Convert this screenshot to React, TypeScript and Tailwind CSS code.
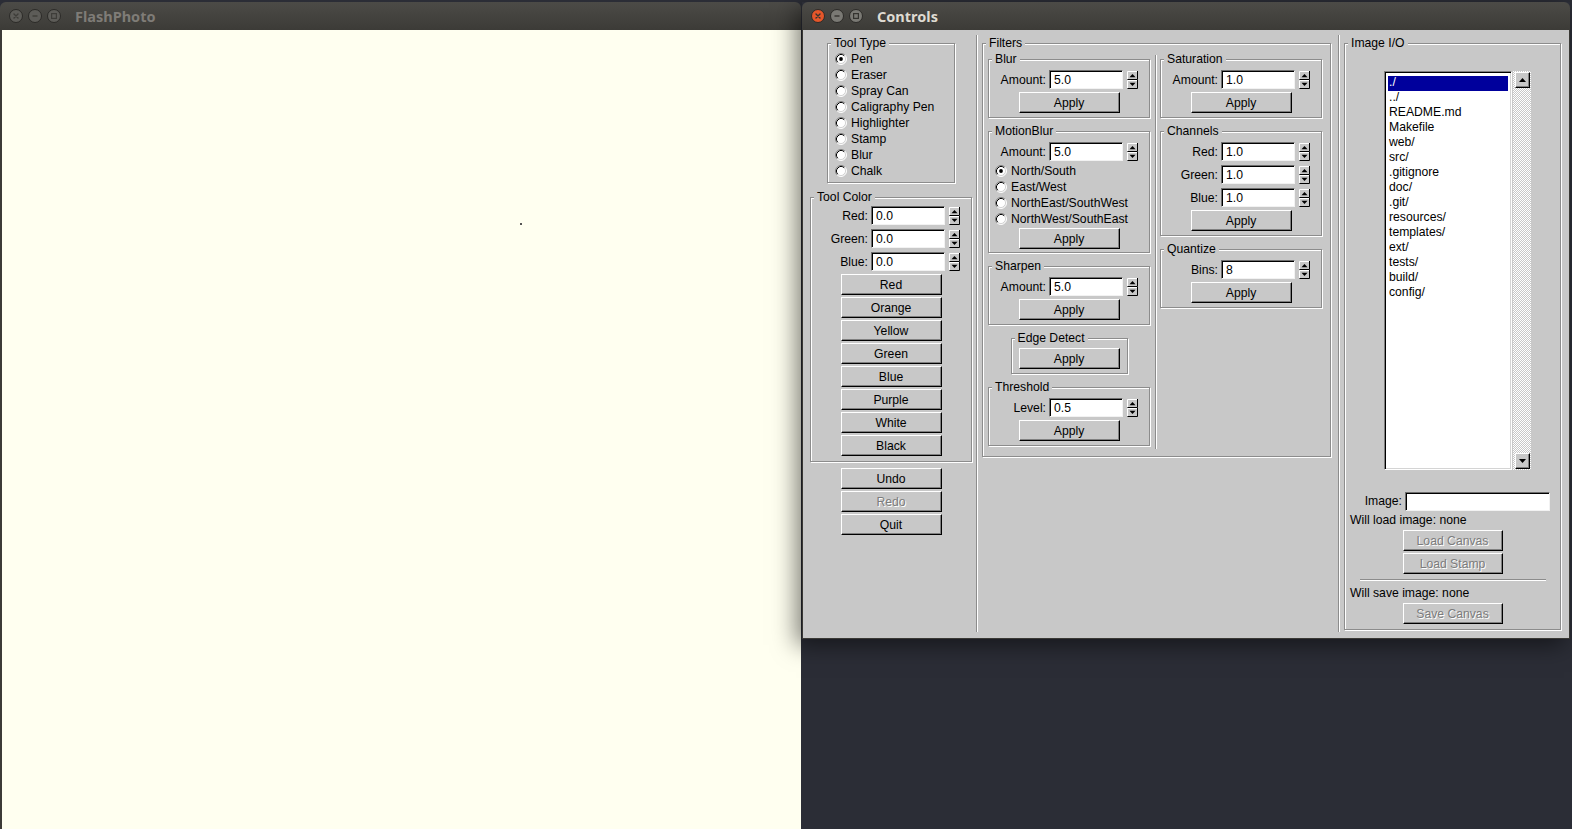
import React from "react";

type Kids = { children?: React.ReactNode };

const FILES = [
  "./",
  "../",
  "README.md",
  "Makefile",
  "web/",
  "src/",
  ".gitignore",
  "doc/",
  ".git/",
  "resources/",
  "templates/",
  "ext/",
  "tests/",
  "build/",
  "config/",
];

// window title bar buttons (ubuntu style)
function WinBtn({ kind, active }: { kind: "close" | "min" | "max"; active: boolean }) {
  const fill = kind === "close" && active ? "#e5562a" : active ? "#7a7974" : "#5d5c58";
  const mark = active ? "#34332f" : "#3e3d39";
  return (
    <svg width="14" height="14" viewBox="0 0 14 14" className="shrink-0">
      <circle cx="7" cy="7" r="6.5" fill={fill} stroke="#2c2b28" strokeWidth="1" />
      {kind === "close" && (
        <path d="M5 5L9 9M9 5L5 9" stroke={mark} strokeWidth="1.4" strokeLinecap="round" />
      )}
      {kind === "min" && <path d="M4.5 7H9.5" stroke={mark} strokeWidth="1.4" />}
      {kind === "max" && (
        <rect x="4.6" y="4.6" width="4.8" height="4.8" fill="none" stroke={mark} strokeWidth="1.2" />
      )}
    </svg>
  );
}

function TitleBar({ title, active }: { title: string; active: boolean }) {
  return (
    <div className="flex h-[28px] shrink-0 items-center gap-[5px] rounded-t-[6px] bg-linear-to-b from-[#4c4b47] to-[#3c3b37] pl-[9px]">
      <WinBtn kind="close" active={active} />
      <WinBtn kind="min" active={active} />
      <WinBtn kind="max" active={active} />
      <span
        className={`ml-[9px] font-['Noto_Sans',sans-serif] text-[14.5px] font-bold leading-[18px] ${
          active ? "text-[#dfdbd2]" : "text-[#7f7c77]"
        }`}
      >
        {title}
      </span>
    </div>
  );
}

// GLUI style etched panel with a label sitting on the top line
function Panel({ label, className = "", children }: { label?: string; className?: string } & Kids) {
  return (
    <div className={"relative shrink-0 border border-[#8c8c8c] shadow-[inset_1px_1px_0_#fff,1px_1px_0_#fff] " + className}>
      {label && (
        <span className="absolute left-[3px] top-[-8px] whitespace-nowrap bg-[#c8c8c8] px-[3px] leading-[14px]">
          {label}
        </span>
      )}
      {children}
    </div>
  );
}

function Spinner() {
  return (
    <svg width="11" height="18" viewBox="0 0 11 18" className="ml-[4px] shrink-0">
      <rect x="0" y="0" width="11" height="18" fill="#c8c8c8" />
      <path d="M0.5 8V0.5H10" stroke="#fff" fill="none" />
      <path d="M0.5 8.5H10.5V0" stroke="#000" fill="none" />
      <path d="M0.5 17V9.5H10" stroke="#fff" fill="none" />
      <path d="M0.5 17.5H10.5V9" stroke="#000" fill="none" />
      <path d="M2.5 6.2L5.5 3L8.5 6.2Z" fill="#000" />
      <path d="M2.5 11.8L8.5 11.8L5.5 15Z" fill="#000" />
    </svg>
  );
}

function TextBox({ value = "", w = "w-[74px]" }: { value?: string; w?: string }) {
  return (
    <div
      className={`${w} h-[19px] shrink-0 border border-t-[#6e6e6e] border-l-[#6e6e6e] border-r-[#f2f2f2] border-b-[#f2f2f2] bg-white pl-[4px] pt-[1px] leading-[16px] shadow-[inset_1px_1px_0_#000]`}
    >
      {value}
    </div>
  );
}

function FieldRow({ label, value }: { label: string; value: string }) {
  return (
    <div className="flex h-[23px] items-center">
      <span className="w-[60px] shrink-0 pr-[3px] text-right leading-[14px]">{label}</span>
      <TextBox value={value} />
      <Spinner />
    </div>
  );
}

function Btn({ label, disabled = false, w = "w-[101px]" }: { label: string; disabled?: boolean; w?: string }) {
  return (
    <button
      type="button"
      className={`flex h-[21px] ${w} shrink-0 items-center justify-center border border-t-white border-l-white border-r-black border-b-black bg-[#c8c8c8] leading-[14px] shadow-[inset_-1px_-1px_0_#808080] ${
        disabled ? "text-[#7c7c7c] [text-shadow:1px_1px_0_#fff]" : "text-black"
      }`}
    >
      {label}
    </button>
  );
}

function BtnRow({ label }: { label: string }) {
  return (
    <div className="flex h-[23px] items-center justify-center">
      <Btn label={label} />
    </div>
  );
}

function Radio({ checked = false }: { checked?: boolean }) {
  return (
    <svg width="12" height="12" viewBox="0 0 12 12" className="shrink-0">
      <circle cx="6" cy="6" r="5" fill="#fff" />
      <path d="M2.11 9.89A5.5 5.5 0 0 1 9.89 2.11" stroke="#808080" fill="none" />
      <path d="M9.89 2.11A5.5 5.5 0 0 1 2.11 9.89" stroke="#fff" fill="none" />
      <path d="M2.82 9.18A4.5 4.5 0 0 1 9.18 2.82" stroke="#000" fill="none" />
      <path d="M9.18 2.82A4.5 4.5 0 0 1 2.82 9.18" stroke="#d4d4d4" fill="none" />
      {checked && <circle cx="6" cy="6" r="1.9" fill="#000" />}
    </svg>
  );
}

function RadioRow({ label, checked = false }: { label: string; checked?: boolean }) {
  return (
    <div className="flex h-[16px] items-center">
      <Radio checked={checked} />
      <span className="ml-[4px] whitespace-nowrap leading-[14px]">{label}</span>
    </div>
  );
}

function ArrowBtn({ up = false }: { up?: boolean }) {
  return (
    <div className="flex h-[16px] w-[15px] items-center justify-center border border-t-white border-l-white border-r-black border-b-black bg-[#c8c8c8] shadow-[inset_-1px_-1px_0_#808080]">
      <svg width="7" height="4" viewBox="0 0 7 4">
        {up ? <path d="M0 4H7L3.5 0Z" fill="#000" /> : <path d="M0 0H7L3.5 4Z" fill="#000" />}
      </svg>
    </div>
  );
}

function VSep() {
  return <div className="h-[597px] w-[2px] shrink-0 border-l border-l-[#8c8c8c] border-r border-r-white" />;
}

function ToolColumn() {
  return (
    <div className="ml-[7px] mt-[8px] flex w-[162px] shrink-0 flex-col items-center">
      <Panel label="Tool Type" className="w-[128px] pb-[3px] pl-[7px] pt-[7px]">
        <RadioRow label="Pen" checked />
        <RadioRow label="Eraser" />
        <RadioRow label="Spray Can" />
        <RadioRow label="Caligraphy Pen" />
        <RadioRow label="Highlighter" />
        <RadioRow label="Stamp" />
        <RadioRow label="Blur" />
        <RadioRow label="Chalk" />
      </Panel>
      <Panel label="Tool Color" className="mt-[14px] w-[162px] pb-[4px] pt-[6px]">
        <FieldRow label="Red:" value="0.0" />
        <FieldRow label="Green:" value="0.0" />
        <FieldRow label="Blue:" value="0.0" />
        {["Red", "Orange", "Yellow", "Green", "Blue", "Purple", "White", "Black"].map((c) => (
          <BtnRow key={c} label={c} />
        ))}
      </Panel>
      <div className="mt-[6px] flex flex-col gap-[2px]">
        <Btn label="Undo" />
        <Btn label="Redo" disabled />
        <Btn label="Quit" />
      </div>
    </div>
  );
}

function FiltersPanel() {
  return (
    <Panel label="Filters" className="ml-[4px] mt-[8px] h-[414px] w-[349px]">
      <div className="flex items-start pl-[5px] pt-[11px]">
        <div className="mt-[4px] flex w-[162px] shrink-0 flex-col gap-[13px]">
          <Panel label="Blur" className="pb-[3px] pt-[8px]">
            <FieldRow label="Amount:" value="5.0" />
            <BtnRow label="Apply" />
          </Panel>
          <Panel label="MotionBlur" className="pb-[2px] pt-[8px]">
            <FieldRow label="Amount:" value="5.0" />
            <div className="pl-[6px]">
              <RadioRow label="North/South" checked />
              <RadioRow label="East/West" />
              <RadioRow label="NorthEast/SouthWest" />
              <RadioRow label="NorthWest/SouthEast" />
            </div>
            <BtnRow label="Apply" />
          </Panel>
          <Panel label="Sharpen" className="pb-[3px] pt-[8px]">
            <FieldRow label="Amount:" value="5.0" />
            <BtnRow label="Apply" />
          </Panel>
          <Panel label="Edge Detect" className="w-[117px] self-center pb-[3px] pt-[8px]">
            <BtnRow label="Apply" />
          </Panel>
          <Panel label="Threshold" className="pb-[3px] pt-[8px]">
            <FieldRow label="Level:" value="0.5" />
            <BtnRow label="Apply" />
          </Panel>
        </div>
        <div className="ml-[5px] h-[394px] w-[2px] shrink-0 border-l border-l-[#8c8c8c] border-r border-r-white" />
        <div className="ml-[3px] mt-[4px] flex w-[162px] shrink-0 flex-col gap-[13px]">
          <Panel label="Saturation" className="pb-[3px] pt-[8px]">
            <FieldRow label="Amount:" value="1.0" />
            <BtnRow label="Apply" />
          </Panel>
          <Panel label="Channels" className="pb-[3px] pt-[8px]">
            <FieldRow label="Red:" value="1.0" />
            <FieldRow label="Green:" value="1.0" />
            <FieldRow label="Blue:" value="1.0" />
            <BtnRow label="Apply" />
          </Panel>
          <Panel label="Quantize" className="pb-[3px] pt-[8px]">
            <FieldRow label="Bins:" value="8" />
            <BtnRow label="Apply" />
          </Panel>
        </div>
      </div>
    </Panel>
  );
}

function ImageIOPanel() {
  return (
    <Panel label="Image I/O" className="ml-[4px] mt-[8px] flex h-[587px] w-[217px] flex-col pt-[27px]">
      <div className="flex pl-[39px]">
        <div className="h-[399px] w-[128px] shrink-0 border border-t-[#808080] border-l-[#808080] border-r-white border-b-white bg-white px-[3px] pt-[4px] shadow-[inset_1px_1px_0_#000,inset_-1px_-1px_0_#d4d4d4]">
          {FILES.map((f, i) => (
            <div
              key={f}
              className={`h-[15px] pl-[1px] leading-[13px] ${i === 0 ? "bg-[#00009c] text-white" : "text-black"}`}
            >
              {f}
            </div>
          ))}
        </div>
        <div className="ml-[1px] flex h-[399px] w-[18px] shrink-0 flex-col justify-between bg-[image:repeating-conic-gradient(#c8c8c8_0%_25%,#ffffff_0%_50%)] bg-[length:2px_2px] py-[1px] pl-[2px]">
          <ArrowBtn up />
          <ArrowBtn />
        </div>
      </div>
      <div className="mt-[21px] flex h-[20px] items-center">
        <span className="w-[60px] shrink-0 pr-[3px] text-right leading-[14px]">Image:</span>
        <TextBox w="w-[145px]" />
      </div>
      <div className="mt-[2px] pl-[5px] leading-[14px]">Will load image: none</div>
      <div className="mt-[3px] flex flex-col items-center gap-[2px]">
        <Btn label="Load Canvas" disabled w="w-[100px]" />
        <Btn label="Load Stamp" disabled w="w-[100px]" />
      </div>
      <div className="mx-auto mt-[5px] h-[2px] w-[186px] border-t border-t-[#8c8c8c] border-b border-b-white" />
      <div className="mt-[5px] pl-[5px] leading-[14px]">Will save image: none</div>
      <div className="mt-[3px] flex justify-center">
        <Btn label="Save Canvas" disabled w="w-[100px]" />
      </div>
    </Panel>
  );
}

export default function App() {
  return (
    <div className="relative h-[829px] w-[1572px] overflow-hidden bg-[#2b2d36] font-['Liberation_Sans',Arial,sans-serif] text-[12.2px] text-black">
      {/* FlashPhoto canvas window */}
      <div className="absolute left-0 top-[2px] flex h-[827px] w-[801px] flex-col">
        <TitleBar title="FlashPhoto" active={false} />
        <div className="relative flex-1 border-l-2 border-l-[#3c3b37] bg-[#fffff0]">
          <div className="absolute left-[518px] top-[193px] h-[2px] w-[2px] bg-[#555]" />
        </div>
      </div>

      {/* Controls window */}
      <div className="absolute left-[802px] top-[2px] flex w-[768px] flex-col shadow-[-6px_6px_22px_rgba(0,0,0,0.5)]">
        <TitleBar title="Controls" active />
        <div className="flex h-[609px] items-start border-x border-b border-[#3a3935] bg-[#c8c8c8] pt-[5px]">
          <ToolColumn />
          <div className="ml-[4px]">
            <VSep />
          </div>
          <FiltersPanel />
          <div className="ml-[7px]">
            <VSep />
          </div>
          <ImageIOPanel />
        </div>
      </div>
    </div>
  );
}
